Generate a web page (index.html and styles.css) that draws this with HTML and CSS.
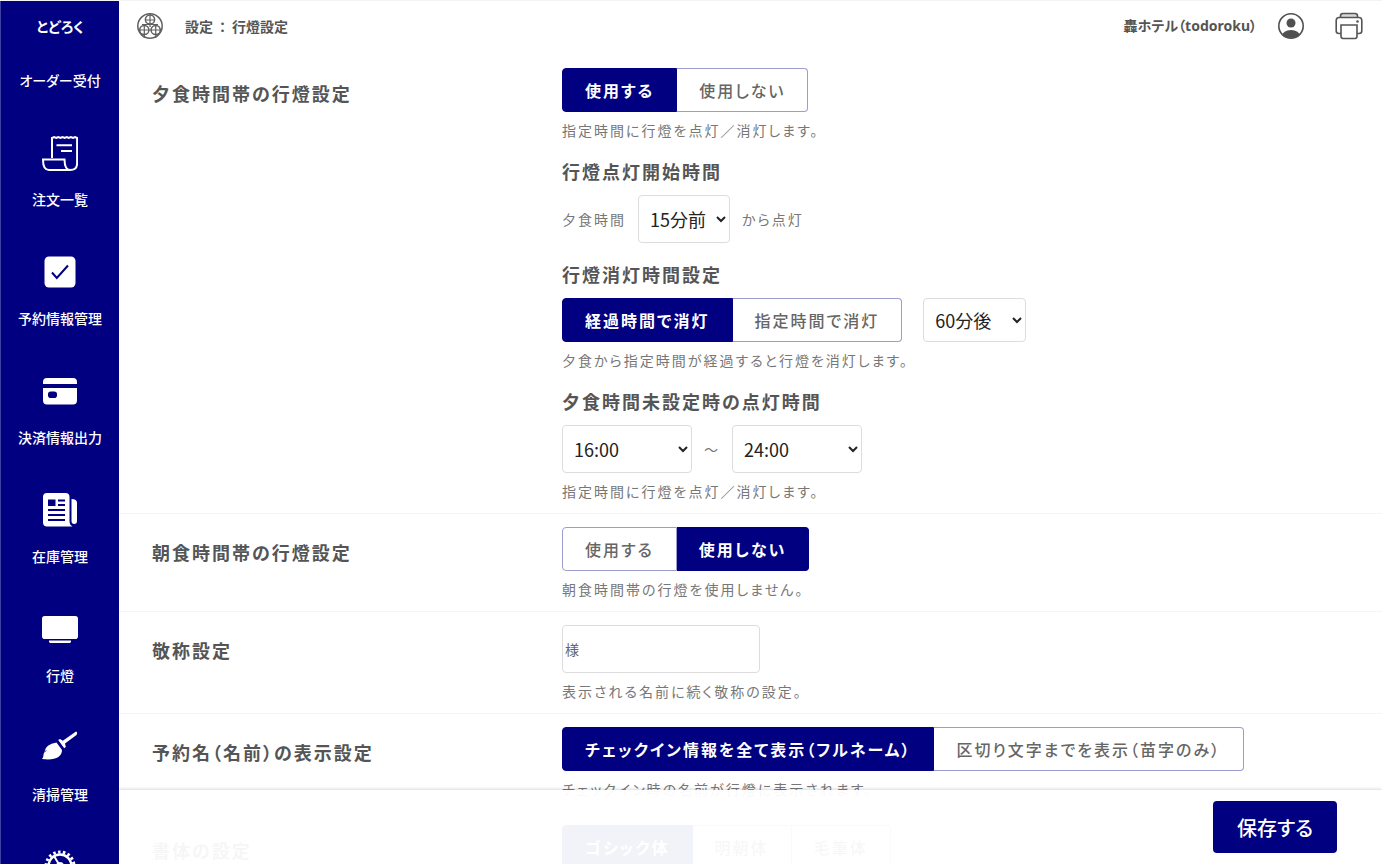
FILE: index.html
```html
<!DOCTYPE html>
<html lang="ja">
<head>
<meta charset="utf-8">
<meta name="viewport" content="width=device-width, initial-scale=1">
<title>設定：行燈設定</title>
<link rel="stylesheet" href="styles.css">
</head>
<body>
<div class="app">
  <aside class="sidebar">
    <div class="brand">とどろく</div>
    <nav class="nav">
      <a class="nav-first" href="#">オーダー受付</a>
      <a class="nav-item" href="#">
        <svg class="nav-icon line" viewBox="0 0 36 36" aria-hidden="true"><path d="M10 23V3l2.100-1 2.100 1 2.100-1 2.100 1 2.100-1 2.100 1 2.100-1 2.100 1 2.100-1 2.100 1 2.100-1 2 1v25.500q0 6.500-7 6.500H7q-6 0-6-10.500h21.500q.2 10.500 5.500 10.500M14.500 10.200h15.500M19 16h11"/></svg>
        <span>注文一覧</span>
      </a>
      <a class="nav-item" href="#">
        <svg class="nav-icon" viewBox="0 0 36 36" aria-hidden="true"><rect x="2.500" y="2.500" width="31" height="31" rx="4.500" fill="#fff"/><path d="M10 18.500l4.800 5.500L26 11.500" fill="none" stroke="#000080" stroke-width="2"/></svg>
        <span>予約情報管理</span>
      </a>
      <a class="nav-item" href="#">
        <svg class="nav-icon" viewBox="0 0 36 36" aria-hidden="true"><path d="M1 11V9q0-4 4-4h26q4 0 4 4v2zM1 15h34v12.500q0 4-4 4H5q-4 0-4-4z" fill="#fff"/><rect x="6" y="18.500" width="9" height="6.500" rx="2.800" fill="#000080"/></svg>
        <span>決済情報出力</span>
      </a>
      <a class="nav-item" href="#">
        <svg class="nav-icon" viewBox="0 0 36 36" aria-hidden="true"><path d="M5 1h18.500q4 0 4 4v24q0 4 3 5.500H5q-4 0-4-4V5q0-4 4-4z" fill="#fff"/><path d="M29.500 7q5.500 0 5.500 4v18q0 3-2.700 3-2.800 0-2.800-3z" fill="#fff"/><path d="M6 7.500h7.500V14H6z" fill="#000080"/><path d="M16 8.500h7M16 13h7M6 18h17M6 23h17M6 28h17" stroke="#000080" stroke-width="2"/></svg>
        <span>在庫管理</span>
      </a>
      <a class="nav-item" href="#">
        <svg class="nav-icon" viewBox="0 0 36 36" aria-hidden="true"><rect x="0" y="5" width="36" height="23" rx="2.800" fill="#fff"/><path d="M7 29.500h22v1.500l-1 1H8l-1-1z" fill="#fff"/></svg>
        <span>行燈</span>
      </a>
      <a class="nav-item" href="#">
        <svg class="nav-icon" viewBox="0 0 36 36" aria-hidden="true"><g transform="translate(0 -2)"><path d="M34 1.500Q36 2 34.500 5L23 13.500l.8 3.500-1.600 1.300-6-8.300 1.800-1 2.800 1.800z" fill="#fff" transform="translate(0 2)"/><path d="M14.500 14.500l5.500 7.500c0 7-7 10.800-20.200 9 2.200-1.500 1-3.500 2.700-7.500q1-7 12-9z" fill="#fff"/><path d="M2 24.500l2-2" stroke="#000080"/></g></svg>
        <span>清掃管理</span>
      </a>
      <a class="nav-item" href="#" aria-label="設定">
        <svg class="nav-icon" viewBox="0 0 36 36" aria-hidden="true"><g fill="none" stroke="#fff"><circle cx="18" cy="17" r="11.500" stroke-width="2.500"/><circle cx="18" cy="17" r="14" stroke-width="3" stroke-dasharray="2.500 2.390"/><circle cx="18" cy="17" r="3" stroke-width="2"/><path d="M16.500 14.500L12 7M20.500 17H29M16.500 19.500L12 27" stroke-width="2"/></g></svg>
      </a>
    </nav>
  </aside>

  <div class="page">
    <header class="topbar">
      <svg class="logo" viewBox="0 0 28 28" aria-hidden="true"><g fill="none" stroke="#606060" stroke-width="1.500"><circle cx="14" cy="14" r="12.200" stroke-width="1.500"/><circle cx="14" cy="7.500" r="4.600"/><circle cx="8.300" cy="18" r="4.600"/><circle cx="19.700" cy="18" r="4.600"/><path d="M14 1v14M8.300 12v14M19.700 12v14M9 8h10M3.500 18h21M6 12.500h16" stroke-width="1.200"/></g></svg>
      <h1 class="page-title"><span>設定</span><span>：</span><span>行燈設定</span></h1>
      <span class="account">轟ホテル（todoroku）</span>
      <button class="icon-button" type="button" aria-label="アカウント">
        <svg viewBox="0 0 28 28" aria-hidden="true"><defs><clipPath id="face"><circle cx="14" cy="14" r="12"/></clipPath></defs><circle cx="14" cy="14" r="12.200" fill="none" stroke="#505050" stroke-width="1.600"/><circle cx="14" cy="11" r="4.500" fill="#505050"/><ellipse cx="14" cy="24" rx="9" ry="6" fill="#505050" clip-path="url(#face)"/></svg>
      </button>
      <button class="icon-button" type="button" aria-label="印刷">
        <svg viewBox="0 0 28 28" aria-hidden="true"><g fill="none" stroke="#555" stroke-width="1.600"><path d="M5.500 5.500V4q0-2.500 2.500-2.500h12q2.500 0 2.500 2.500v1.500" fill="#d8d8d8"/><path d="M6 21.500H4q-2.800 0-2.800-2.500V8.500q0-3 2.800-3h20q2.800 0 2.800 3V19q0 2.500-2.800 2.500h-2"/><path d="M6 13h16v11q0 2.500-2 2.500H8q-2 0-2-2.500z"/></g><circle cx="22.500" cy="9.500" r="1.300" fill="#555"/></svg>
      </button>
    </header>

    <main class="settings">
      <section class="row">
        <h2 class="row-title">夕食時間帯の行燈設定</h2>
        <div class="row-body">
          <div class="toggle" role="radiogroup" aria-label="夕食時間帯の行燈設定">
            <input type="radio" name="dinner" id="dinner-on" checked><label for="dinner-on">使用する</label>
            <input type="radio" name="dinner" id="dinner-off"><label for="dinner-off">使用しない</label>
          </div>
          <p class="note">指定時間に行燈を点灯／消灯します。</p>
          <h3 class="sub-title">行燈点灯開始時間</h3>
          <div class="field-line">
            <label for="start">夕食時間</label>
            <select class="select" id="start"><option>15分前</option></select>
            <span>から点灯</span>
          </div>
          <h3 class="sub-title">行燈消灯時間設定</h3>
          <div class="toggle-line">
            <div class="toggle" role="radiogroup" aria-label="行燈消灯時間設定">
              <input type="radio" name="off" id="off-elapsed" checked><label for="off-elapsed">経過時間で消灯</label>
              <input type="radio" name="off" id="off-fixed"><label for="off-fixed">指定時間で消灯</label>
            </div>
            <select class="select select-medium" aria-label="経過時間"><option>60分後</option></select>
          </div>
          <p class="note">夕食から指定時間が経過すると行燈を消灯します。</p>
          <h3 class="sub-title">夕食時間未設定時の点灯時間</h3>
          <div class="field-line">
            <select class="select select-time" aria-label="開始時刻"><option>16:00</option></select>
            <span>～</span>
            <select class="select select-time" aria-label="終了時刻"><option>24:00</option></select>
          </div>
          <p class="note">指定時間に行燈を点灯／消灯します。</p>
        </div>
      </section>

      <section class="row">
        <h2 class="row-title">朝食時間帯の行燈設定</h2>
        <div class="row-body">
          <div class="toggle" role="radiogroup" aria-label="朝食時間帯の行燈設定">
            <input type="radio" name="breakfast" id="breakfast-on"><label for="breakfast-on">使用する</label>
            <input type="radio" name="breakfast" id="breakfast-off" checked><label for="breakfast-off">使用しない</label>
          </div>
          <p class="note">朝食時間帯の行燈を使用しません。</p>
        </div>
      </section>

      <section class="row">
        <h2 class="row-title"><label for="honorific">敬称設定</label></h2>
        <div class="row-body">
          <input class="text-input" id="honorific" type="text" value="様">
          <p class="note">表示される名前に続く敬称の設定。</p>
        </div>
      </section>

      <section class="row">
        <h2 class="row-title">予約名（名前）の表示設定</h2>
        <div class="row-body">
          <div class="toggle" role="radiogroup" aria-label="予約名（名前）の表示設定">
            <input type="radio" name="name" id="name-full" checked><label for="name-full">チェックイン情報を全て表示（フルネーム）</label>
            <input type="radio" name="name" id="name-family"><label for="name-family">区切り文字までを表示（苗字のみ）</label>
          </div>
          <p class="note">チェックイン時の名前が行燈に表示されます。</p>
        </div>
      </section>

      <section class="row">
        <h2 class="row-title">書体の設定</h2>
        <div class="row-body">
          <div class="toggle" role="radiogroup" aria-label="書体の設定">
            <input type="radio" name="font" id="font-gothic" checked><label for="font-gothic">ゴシック体</label>
            <input type="radio" name="font" id="font-mincho"><label for="font-mincho">明朝体</label>
            <input type="radio" name="font" id="font-brush"><label for="font-brush">毛筆体</label>
          </div>
        </div>
      </section>
    </main>

    <footer class="savebar">
      <button class="save" type="button">保存する</button>
    </footer>
  </div>
</div>
</body>
</html>
```
FILE: styles.css
```css
* {
  box-sizing: border-box;
}

body {
  margin: 0;
  color: #555;
  background: #fff;
  font-family: "Noto Sans CJK JP", "Noto Sans", sans-serif;
  font-size: 14px;
  line-height: 20px;
  font-feature-settings: "palt";
}

h1, h2, h3, p {
  margin: 0;
}

button, input, select {
  font-family: inherit;
  font-feature-settings: inherit;
}

.app {
  display: flex;
  height: 100vh;
  overflow: hidden;
  border-top: 1px solid #f3f3f3;
}

/* Sidebar */
.sidebar {
  flex: 0 0 119px;
  overflow: hidden;
  color: #fff;
  background: #000080;
  border-left: 1px solid #4040a0;
  text-align: center;
  font-weight: 500;
}

.brand {
  padding-top: 15px;
  font-weight: 700;
}

.nav {
  display: flex;
  flex-direction: column;
  gap: 45px;
  padding-top: 34px;
}

.nav a {
  color: inherit;
  text-decoration: none;
}

.nav-item {
  display: flex;
  flex-direction: column;
  align-items: center;
  gap: 18px;
}

.nav-icon {
  width: 36px;
  height: 36px;
}

.line {
  fill: none;
  stroke: #fff;
  stroke-width: 2;
}

/* Page */
.page {
  position: relative;
  flex: 1;
  min-width: 0;
  display: flex;
  flex-direction: column;
}

.topbar {
  display: flex;
  align-items: center;
  padding: 11px 19px 15px 17px;
}

.logo {
  width: 28px;
  height: 28px;
  margin-right: 21px;
}

.page-title {
  display: flex;
  gap: 6px;
  font-size: 14px;
  line-height: 20px;
  font-weight: 700;
}

.account {
  margin-left: auto;
  font-family: "Noto Sans", "Noto Sans CJK JP", sans-serif;
  font-weight: 700;
}

.icon-button {
  width: 28px;
  height: 28px;
  margin-left: 20px;
  padding: 0;
  border: 0;
  background: none;
}

.icon-button + .icon-button {
  margin-left: 30px;
}

.icon-button svg {
  display: block;
}

.settings {
  flex: 1;
  overflow-y: auto;
  scrollbar-width: none;
  letter-spacing: 2px;
}

.row {
  display: grid;
  grid-template-columns: 1fr 2fr;
  padding: 13px 0 12px 33px;
  border-bottom: 1px solid #f5f5f5;
}

.row-title, .sub-title {
  font-size: 18px;
  line-height: 28px;
  font-weight: 700;
}

.row-title {
  padding-top: 11px;
}

.sub-title {
  margin: 17px 0 10px;
}

.note {
  margin-top: 8px;
  color: #777;
}

.toggle {
  display: flex;
  width: max-content;
  position: relative;
}

.toggle input {
  position: absolute;
  opacity: 0;
}

.toggle label {
  height: 44px;
  padding: 0 22px;
  border: 1px solid #9c9cd0;
  border-left-width: 0;
  color: #666;
  font-size: 16px;
  font-weight: 500;
  line-height: 43px;
}

.toggle label:first-of-type {
  border-left-width: 1px;
  border-radius: 4px 0 0 4px;
}

.toggle label:last-of-type {
  border-radius: 0 4px 4px 0;
}

.toggle input:checked + label {
  color: #fff;
  background: #000080;
  border-color: #000080;
  font-weight: 700;
}

.toggle-line {
  display: flex;
  gap: 21px;
}

.field-line {
  display: flex;
  align-items: center;
  gap: 12px;
  color: #777;
}

.select {
  width: 92px;
  height: 48px;
  padding: 0 0 0 7px;
  color: #222;
  background-color: #fff;
  border: 1px solid #ddd;
  border-radius: 4px;
  font-size: 18px;
}

.select-medium {
  width: 103px;
  height: 44px;
}

.select-time {
  width: 130px;
}

.text-input {
  display: block;
  width: 198px;
  height: 48px;
  padding: 0 2px;
  color: #666;
  background: #fff;
  border: 1px solid #ddd;
  border-radius: 4px;
  font-size: 14px;
}

/* Save bar over the scrolling settings */
.savebar {
  position: absolute;
  right: 0;
  bottom: 0;
  left: 0;
  display: flex;
  justify-content: flex-end;
  padding: 11px 45px;
  background: rgba(255, 255, 255, 0.95);
  box-shadow: 0 -1px 3px rgba(0, 0, 0, 0.15);
}

.save {
  height: 52px;
  padding: 0 24px;
  color: #fff;
  background: #000080;
  border: 0;
  border-radius: 4px;
  font-size: 20px;
  font-weight: 500;
}
```
